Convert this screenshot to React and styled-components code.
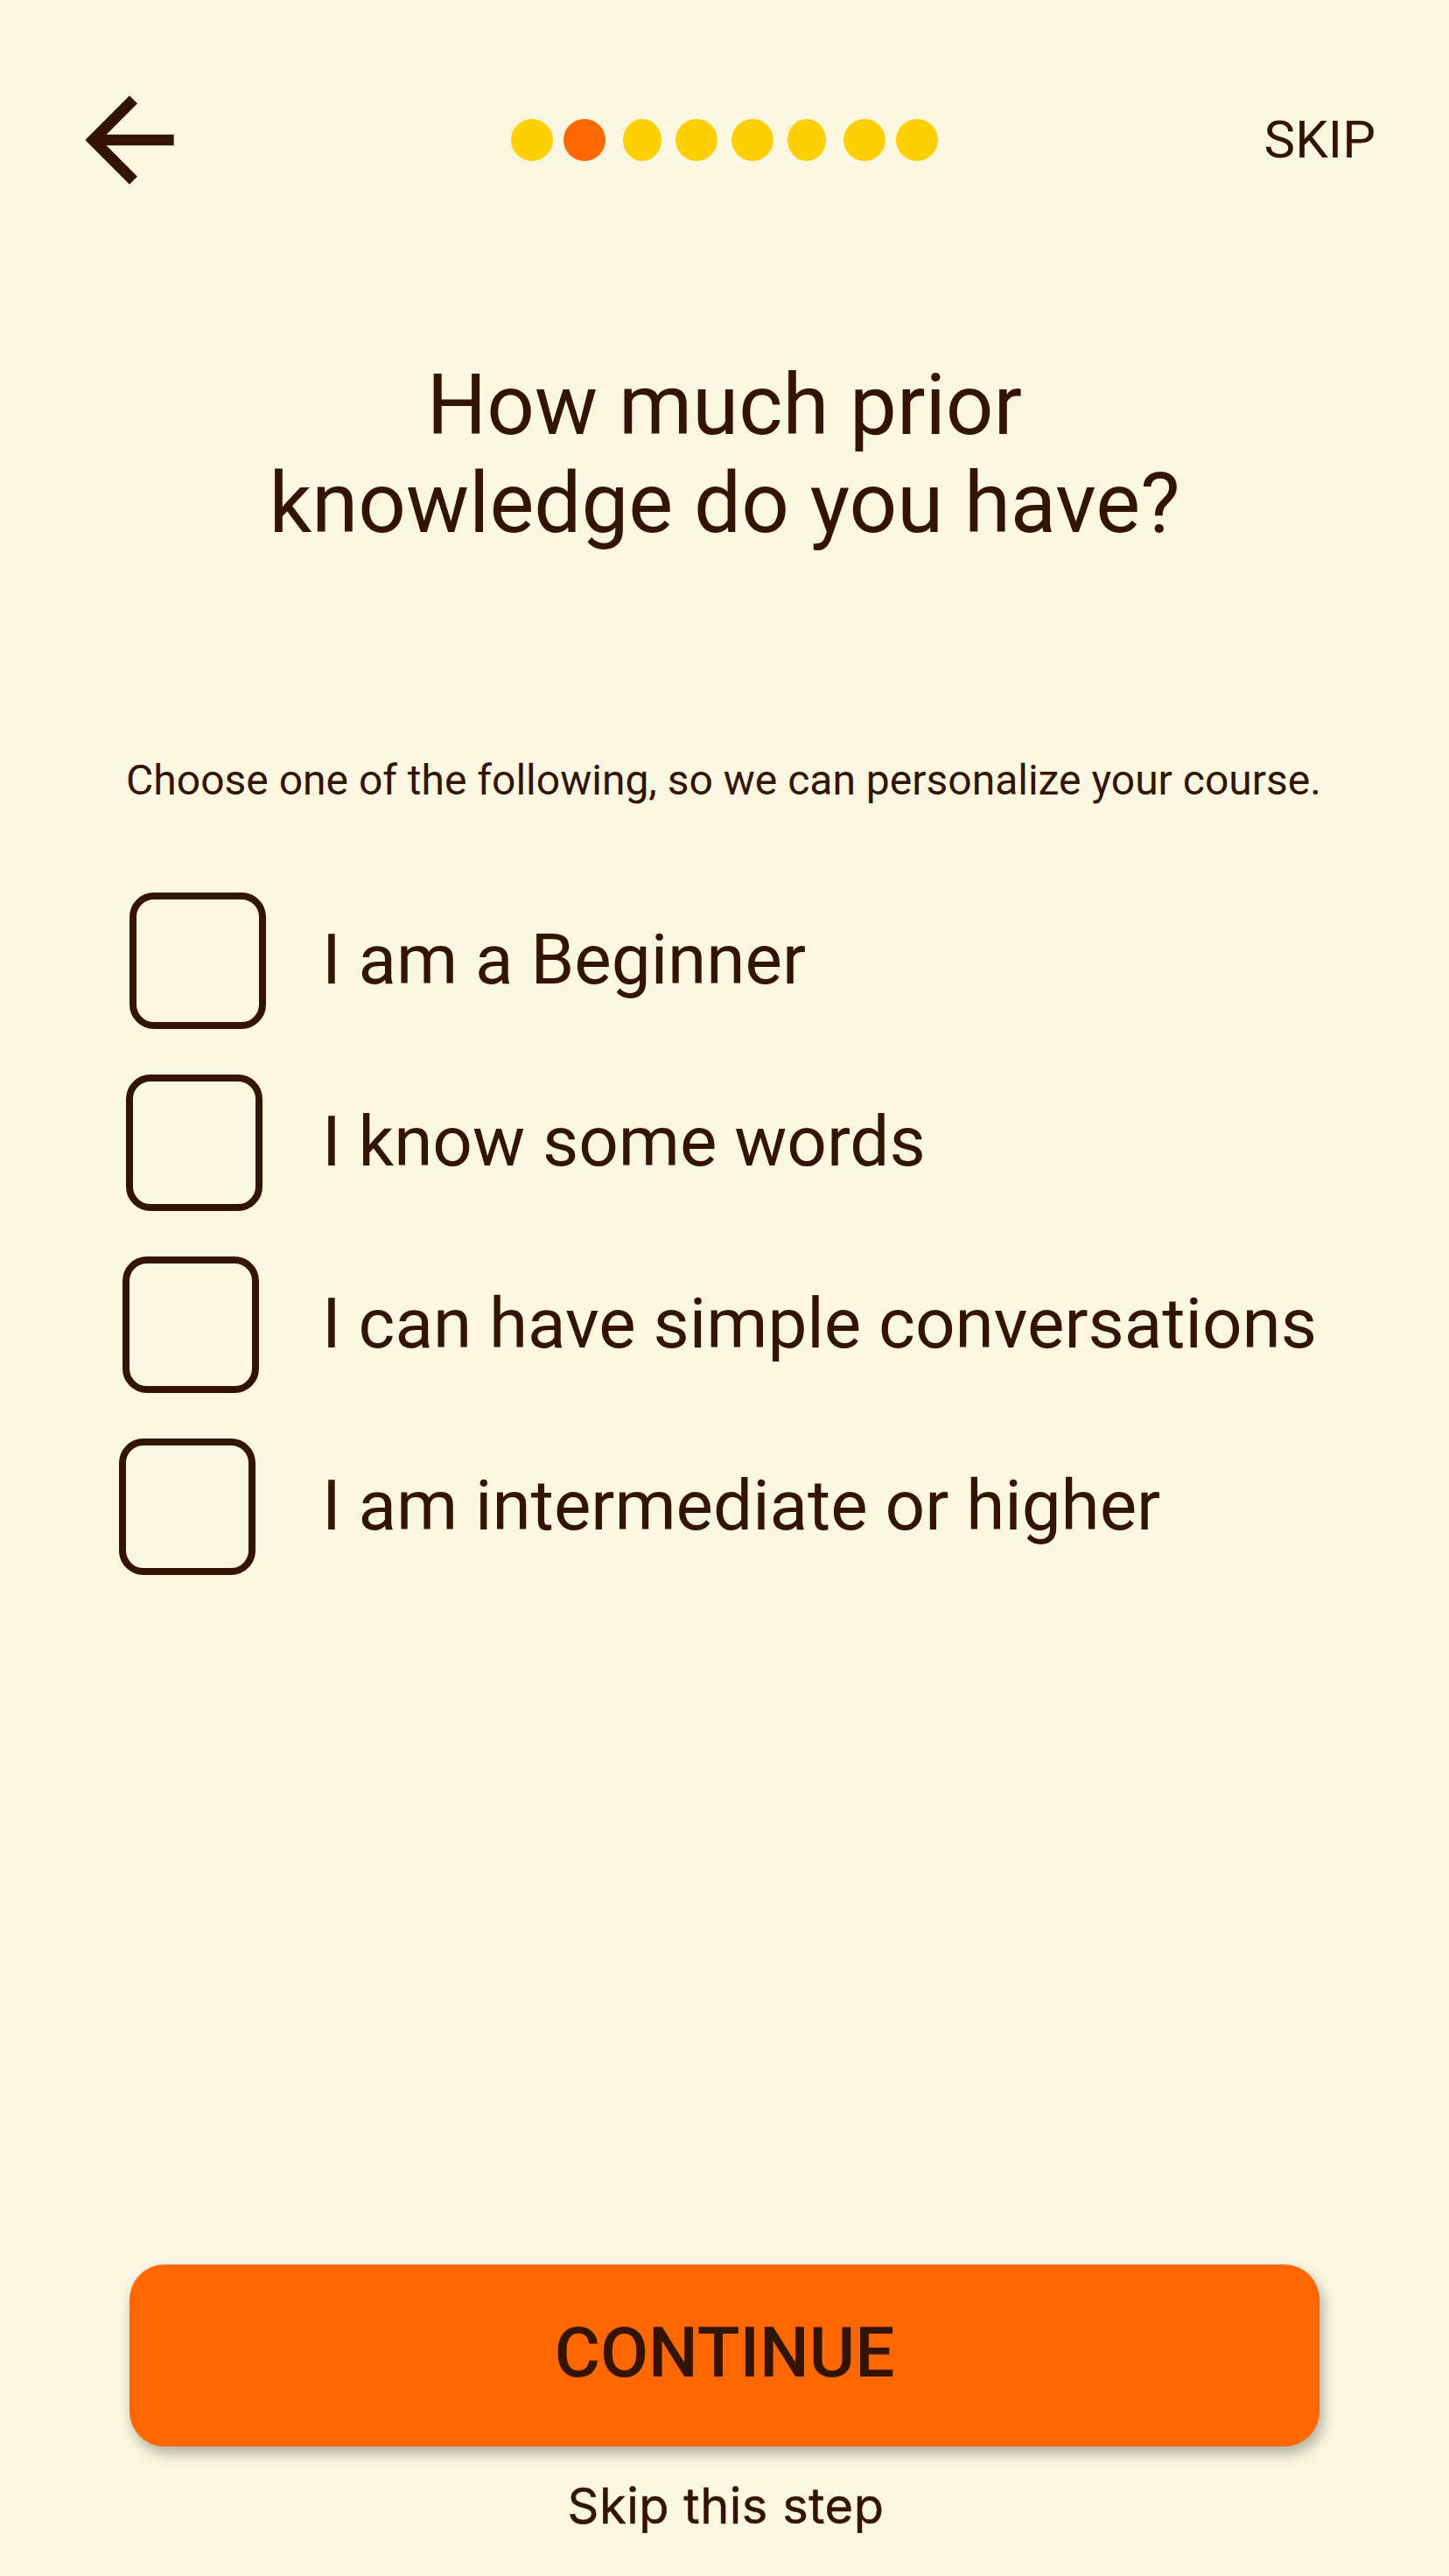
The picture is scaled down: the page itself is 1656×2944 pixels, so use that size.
import React, { useState } from 'react';
import styled, { createGlobalStyle } from 'styled-components';

const GlobalStyle = createGlobalStyle`
  body {
    margin: 0;

    background-color: #fcf7e0;
  }
`;

const OnboardingBlock = styled.div`
  display: flex;
  flex-direction: column;

  box-sizing: border-box;
  width: 1656px;
  height: 2944px;
  padding-top: 84px;

  font-family: Roboto, sans-serif;
  color: #331400;
  background-color: #fcf7e0;

  button {
    padding: 0;

    font-family: inherit;
    color: inherit;

    background: none;
    border: none;
    cursor: pointer;
  }
`;

const Header = styled.header`
  display: grid;
  grid-template-columns: 152px 1fr 152px;
  align-items: center;

  height: 152px;
  padding: 0 72px;
`;

const BackButton = styled.button`
  width: 152px;
  height: 152px;

  svg {
    display: block;
  }
`;

const Steps = styled.div`
  display: flex;
  justify-content: center;
`;

const Step = styled.span`
  width: ${({ $width }) => $width}px;
  height: 48px;
  margin-left: ${({ $gap }) => $gap}px;

  background-color: ${({ $active }) => ($active ? '#ff6700' : '#ffd000')};
  border-radius: 50%;
`;

const SkipButton = styled.button`
  justify-self: end;
  margin-right: 12px;

  font-size: 60px;
  line-height: 72px;
`;

const Title = styled.h1`
  margin: 171px 0 0;

  font-size: 96px;
  font-weight: 400;
  line-height: 112px;
  text-align: center;
`;

const Description = styled.p`
  margin: 233px 2px 0 0;

  font-size: 48px;
  line-height: 56px;
  text-align: center;
  white-space: nowrap;
`;

const OptionList = styled.div`
  display: flex;
  flex-direction: column;
  gap: 52px;

  margin-top: 100px;
`;

const Option = styled.label`
  display: grid;
  grid-template-columns: 368px 1fr;
  align-items: center;

  height: 156px;

  cursor: pointer;
`;

const CheckBox = styled.input`
  appearance: none;

  box-sizing: border-box;
  width: 156px;
  height: 156px;
  margin: 0 0 0 ${({ $left }) => $left}px;

  border: 8px solid #331400;
  border-radius: 28px;

  &:checked {
    background-color: #ff6700;
  }
`;

const OptionText = styled.span`
  padding-bottom: 3px;

  font-size: 80px;
  line-height: 94px;
  white-space: nowrap;
`;

const Footer = styled.footer`
  display: flex;
  flex-direction: column;
  align-items: center;

  margin-top: auto;
  padding-bottom: 44px;
`;

const ContinueButton = styled.button`
  && {
    width: 1360px;
    height: 208px;
    padding-bottom: 6px;

    font-size: 80px;
    font-weight: 500;

    background-color: #ff6700;
    border-radius: 40px;
    box-shadow: 4px 8px 16px rgba(0, 0, 0, 0.3);
  }
`;

const SkipStep = styled.button`
  margin: 32px 0 0 3px;

  && {
    font-family: Inter, sans-serif;
    font-size: 56px;
    line-height: 72px;
    letter-spacing: 0.5px;
    -webkit-text-stroke: 0.5px #331400;
  }
`;

const steps = [
  { width: 48, gap: 0 },
  { width: 48, gap: 12 },
  { width: 44, gap: 20 },
  { width: 48, gap: 16 },
  { width: 48, gap: 16 },
  { width: 44, gap: 16 },
  { width: 48, gap: 20 },
  { width: 48, gap: 12 },
];

const options = [
  { id: 'beginner', text: 'I am a Beginner', left: 148 },
  { id: 'words', text: 'I know some words', left: 144 },
  { id: 'simple', text: 'I can have simple conversations', left: 140 },
  { id: 'intermediate', text: 'I am intermediate or higher', left: 136 },
];

const App = () => {
  const [selected, setSelected] = useState(null);

  return (
    <>
      <GlobalStyle />
      <OnboardingBlock>
        <Header>
          <BackButton aria-label="Back">
            <svg width="152" height="152" viewBox="0 0 24 24" fill="#331400">
              <path d="M20 11H7.83l5.59-5.59L12 4l-8 8 8 8 1.41-1.41L7.83 13H20v-2z" />
            </svg>
          </BackButton>
          <Steps>
            {steps.map(({ width, gap }, index) => (
              <Step key={index} $width={width} $gap={gap} $active={index === 1} />
            ))}
          </Steps>
          <SkipButton>SKIP</SkipButton>
        </Header>
        <Title>
          How much prior
          <br />
          knowledge do you have?
        </Title>
        <Description>
          Choose one of the following, so we can personalize your course.
        </Description>
        <OptionList>
          {options.map(({ id, text, left }) => (
            <Option key={id}>
              <CheckBox
                type="checkbox"
                $left={left}
                checked={selected === id}
                onChange={() => setSelected(selected === id ? null : id)}
              />
              <OptionText>{text}</OptionText>
            </Option>
          ))}
        </OptionList>
        <Footer>
          <ContinueButton>CONTINUE</ContinueButton>
          <SkipStep>Skip this step</SkipStep>
        </Footer>
      </OnboardingBlock>
    </>
  );
};

export default App;
